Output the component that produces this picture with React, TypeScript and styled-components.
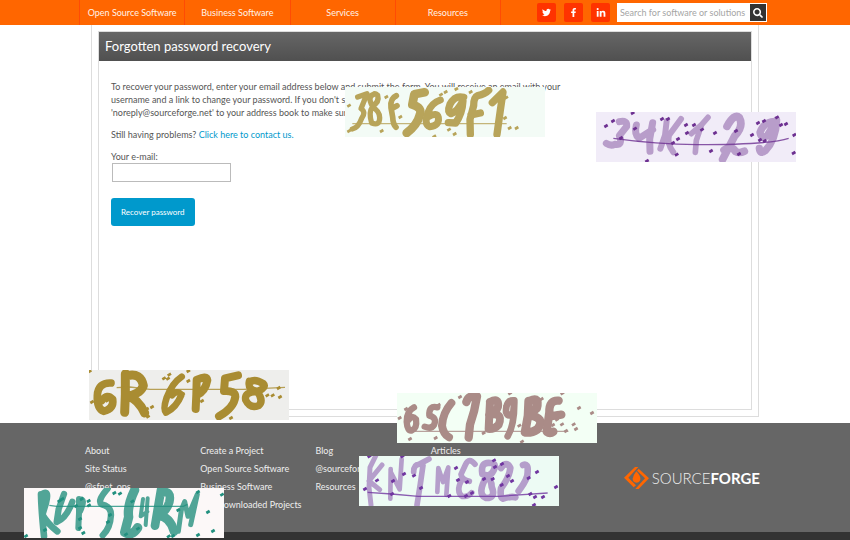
import React from "react";
import styled, { createGlobalStyle } from "styled-components";
import { FaTwitter, FaFacebookF, FaLinkedinIn, FaSearch } from "react-icons/fa";

const GlobalStyle = createGlobalStyle`
  *, *::before, *::after { box-sizing: border-box; }
  body {
    margin: 0;
    background: #fff;
    color: #555;
    font-family: Lato, "Open Sans", sans-serif;
    font-size: 9px;
    line-height: 13px;
  }
  a { text-decoration: none; }
  h1, p, ul { margin: 0; padding: 0; }
  ul { list-style: none; }
`;

const Page = styled.div`
  position: relative;
  min-height: 100vh;
  overflow: hidden;
  display: flex;
  flex-direction: column;
`;

const TopBar = styled.header`
  background: #f60;
`;

const TopBarInner = styled.div`
  display: flex;
  align-items: center;
  width: 100%;
  max-width: 692px;
  height: 25px;
  margin: 0 auto;
  padding-right: 4px;
`;

const Nav = styled.nav`
  display: flex;
  flex: 1;
  max-width: 422px;
  border-left: 1px solid #ff4b05;
`;

const NavLink = styled.a`
  flex: 1;
  border-right: 1px solid #ff4b05;
  color: #fff3e8;
  line-height: 25px;
  text-align: center;
  white-space: nowrap;
`;

const Social = styled.div`
  display: flex;
  gap: 8px;
  margin-left: auto;
`;

const SocialLink = styled.a`
  display: grid;
  place-items: center;
  width: 19px;
  height: 19px;
  border-radius: 2px;
  background: #f30;
  color: #fff;
`;

const Search = styled.form`
  display: flex;
  width: 150px;
  height: 19px;
  margin-left: 7px;
  padding-right: 1px;
  background: #fff;
`;

const SearchInput = styled.input`
  flex: 1;
  min-width: 0;
  border: 0;
  padding: 0 3px;
  background: #fff;
  font: inherit;
  outline: none;
  &::placeholder { color: #a5a5a5; opacity: 1; }
`;

const SearchButton = styled.button`
  display: grid;
  place-items: center;
  width: 16px;
  margin: 1px 0;
  padding: 0;
  border: 0;
  background: #333;
  color: #fff;
`;

const Frame = styled.main`
  display: flex;
  flex: 1;
  width: 100%;
  max-width: 668px;
  margin: 0 auto 6px;
  padding: 6px;
  border: 1px solid #ddd;
  border-top: 0;
`;

const Panel = styled.section`
  flex: 1;
  min-height: 320px;
  border: 1px solid #ddd;
`;

const Title = styled.h1`
  padding: 0 6px;
  background: linear-gradient(#666, #505050);
  color: #fff;
  font-size: 13px;
  font-weight: 400;
  line-height: 29px;
`;

const Content = styled.div`
  padding: 19px 12px;
`;

const Paragraph = styled.p`
  margin-bottom: 9px;
`;

const TextLink = styled.a`
  color: #09c;
`;

const Label = styled.label`
  display: block;
`;

const EmailInput = styled.input`
  display: block;
  width: 119px;
  height: 19px;
  margin-left: 1px;
  border: 1px solid #bbb;
  font: inherit;
`;

const SubmitButton = styled.button`
  height: 28px;
  margin-top: 16px;
  padding: 0 10px;
  border: 0;
  border-radius: 3px;
  background: #09c;
  color: #fff;
  font: inherit;
  font-size: 8px;
`;

const Footer = styled.footer`
  background: #666;
  border-bottom: 8px solid #333;
`;

const FooterInner = styled.div`
  display: flex;
  align-items: center;
  justify-content: space-between;
  width: 100%;
  max-width: 680px;
  height: 109px;
  margin: 0 auto;
`;

const FooterColumns = styled.div`
  display: grid;
  grid-template-columns: repeat(4, 1fr);
  flex: 1;
  max-width: 461px;
`;

const FooterLink = styled.a`
  display: block;
  color: #eee;
  line-height: 18px;
  white-space: nowrap;
`;

const Brand = styled.a`
  display: flex;
  align-items: center;
  gap: 3px;
  padding-right: 5px;
  color: #eee;
  font-size: 15px;
  font-weight: 300;
  line-height: 24px;
  b { font-weight: 700; color: #fff; }
`;

const Tile = styled.svg<{ $x: number; $y: number }>`
  position: absolute;
  left: ${(p) => p.$x}px;
  top: ${(p) => p.$y}px;
  width: 200px;
  height: 50px;
`;

type Scribble = {
  x: number; y: number; box: string; paper: string; ink: string; fleck: string;
  line: string; strokes: [number, string][]; flecks: number[][];
};

const scribbles: Scribble[] = [
  {
    x: 345, y: 87, box: "0 36 600 150", paper: "#f3fbf6", ink: "#b8a45a", fleck: "#b8a45a",
    line: "M22 146H485",
    strokes: [
      [16, "M38 66L66 56L48 101Q64 112 50 130Q40 158 22 162M86 58Q66 66 82 93Q104 82 98 61Q90 54 86 58M82 96Q70 112 80 144Q104 154 104 128Q104 108 82 96"],
      [17, "M154 62Q135 70 138 98L143 126Q144 148 153 157M142 100L156 92"],
      [26, "M239 52L208 58L202 89Q234 98 224 121Q217 150 185 174"],
      [21, "M286 75Q260 84 250 110Q235 148 254 155Q284 152 280 127Q276 112 252 124"],
      [22, "M356 67Q330 60 315 88Q306 110 318 116Q338 110 354 77Q352 116 332 144L310 143"],
      [22, "M376 178L375 133L386 92Q386 67 398 62Q420 58 431 46M378 120L406 114"],
      [22, "M442 83L474 51L466 106L456 178"],
    ],
    flecks: [[12,92],[124,66],[151,69],[166,126],[12,168],[110,168],[268,184],[288,59],[302,51],[334,42],[377,51],[484,68],[480,129],[494,159],[515,159],[329,177],[312,164],[288,79]],
  },
  {
    x: 596, y: 112, box: "18 21 600 150", paper: "#f1ecf8", ink: "#b89dca", fleck: "#6d3091",
    line: "M70 100Q200 118 320 119Q540 119 596 100",
    strokes: [
      [21, "M88 50Q112 44 110 64L88 92Q100 122 74 118Q62 124 49 115"],
      [21, "M139 60Q132 88 147 100L188 74M188 53L179 102L180 139"],
      [18, "M230 48L225 91L211 131M273 42L237 91Q230 114 250 142"],
      [17, "M304 86L335 59L319 106L316 142M335 59L354 37"],
      [23, "M411 64Q433 24 448 38Q462 64 434 93L398 163M402 135Q424 119 436 139Q448 146 463 139"],
      [22, "M553 49Q520 52 510 82Q514 104 532 92L560 45Q558 104 526 137Q510 150 508 130"],
    ],
    flecks: [[48,63],[69,48],[128,24],[135,71],[93,99],[216,42],[234,42],[288,60],[312,60],[291,84],[264,102],[249,114],[260,149],[171,168],[336,74],[375,84],[363,138],[438,78],[447,147],[486,90],[504,54],[522,48],[561,37],[573,60],[588,57],[510,105],[524,108],[613,90],[611,144]],
  },
  {
    x: 89, y: 370, box: "27 15 600 150", paper: "#eeeeec", ink: "#a98c32", fleck: "#a98c32",
    line: "M110 68L150 66L210 73H490L615 67",
    strokes: [
      [23, "M93 54Q54 52 52 92Q50 130 71 139Q102 132 98 103Q82 84 65 107"],
      [27, "M136 27L136 88L134 142M142 32Q182 22 190 62Q184 84 145 94Q174 102 194 144"],
      [20, "M305 35Q276 54 260 98Q248 134 258 143Q290 126 304 90Q292 73 276 91"],
      [24, "M350 45L349 88L347 132M352 44Q380 30 382 46Q376 79 351 90"],
      [24, "M474 31L435 40L432 78Q466 76 466 95Q462 128 417 154"],
      [22, "M508 49Q502 76 535 79Q560 66 550 56Q525 40 510 51M532 80Q492 80 497 105Q510 132 536 122Q552 107 532 80"],
    ],
    flecks: [[29,19],[36,111],[82,107],[140,18],[216,126],[201,132],[204,155],[268,29],[264,41],[252,40],[325,18],[325,48],[309,87],[366,108],[453,159],[562,91],[578,91],[596,69],[600,96]],
  },
  {
    x: 397, y: 393, box: "21 24 600 150", paper: "#f3fff5", ink: "#aa8b87", fleck: "#aa8b87",
    line: "M72 139H535",
    strokes: [
      [19, "M72 67Q50 78 50 110Q52 140 66 136Q82 130 78 103Q66 88 56 105"],
      [19, "M142 67Q116 60 118 92Q142 98 132 120Q124 133 104 125"],
      [24, "M184 54Q158 84 156 122Q160 148 177 157"],
      [25, "M229 51Q235 30 261 34Q254 80 240 119L236 158"],
      [24, "M300 51L298 88L296 132M300 51Q328 36 324 65Q316 90 297 90Q342 81 326 119Q314 132 298 132"],
      [20, "M371 46Q348 44 348 81Q356 102 370 80L373 46Q374 119 353 154"],
      [26, "M416 48L414 92L405 142M420 48Q450 34 440 70L414 90Q470 98 442 133Q426 144 405 142"],
      [25, "M506 47Q477 44 478 82L470 140Q480 148 490 140M480 94L514 89"],
    ],
    flecks: [[29,99],[48,72],[60,162],[146,60],[137,159],[210,36],[262,27],[281,144],[346,63],[388,122],[360,25],[396,170],[455,42],[501,84],[501,104],[516,118],[489,120],[528,138],[551,118],[558,132],[567,69],[606,84],[517,25]],
  },
  {
    x: 359, y: 456, box: "12 18 600 150", paper: "#edfbf4", ink: "#b59ecb", fleck: "#7036a0",
    line: "M38 127L110 132L190 139H430L578 129",
    strokes: [
      [15, "M62 18L45 52L42 112L48 165M81 45L42 93L74 119"],
      [14, "M107 57L106 146M108 68L134 118L140 27"],
      [17, "M176 66Q176 44 192 43L222 27M204 46L196 102L186 165"],
      [14, "M247 126L250 54L264 96L280 52L274 135"],
      [17, "M360 43Q342 20 331 45L318 73Q320 88 343 94M320 90Q302 124 321 139Q340 142 350 128"],
      [20, "M406 39Q376 35 382 72Q408 86 419 54Q422 38 406 39M395 79Q364 132 393 144Q424 144 410 110Q410 90 395 79"],
      [20, "M438 54Q455 31 466 54Q463 82 438 115Q434 142 444 146Q468 138 481 142"],
      [20, "M504 45Q520 39 518 65Q520 85 491 123"],
    ],
    flecks: [[30,117],[43,19],[66,91],[114,93],[111,132],[142,19],[147,72],[177,77],[198,114],[303,54],[309,90],[336,96],[351,129],[333,138],[283,138],[387,87],[413,87],[417,31],[420,51],[441,42],[459,78],[471,93],[440,105],[521,84],[546,66],[526,132],[540,141],[564,141],[603,111],[537,165]],
  },
  {
    x: 24, y: 488, box: "12 24 600 150", paper: "#fcf8f8", ink: "#51a597", fleck: "#21907f",
    line: "M88 76L110 79H490L502 73",
    strokes: [
      [20, "M63 43Q64 90 72 168M67 42Q88 28 78 68L67 104Q84 133 112 154"],
      [19, "M132 42L116 87L110 126Q140 114 157 65"],
      [18, "M177 57L177 99L175 144M178 58Q199 55 180 94"],
      [19, "M263 26Q230 63 245 73Q274 80 273 105Q271 145 248 166"],
      [28, "M344 30Q321 78 326 111L314 157Q336 170 353 143"],
      [12, "M369 57L362 109L382 95M383 55L377 135"],
      [26, "M423 30L414 83L405 137M424 38Q456 29 448 66Q438 98 413 106Q452 110 462 155"],
      [15, "M475 154L484 90L494 65L504 109L532 43L512 134"],
    ],
    flecks: [[18,168],[118,63],[127,57],[168,78],[185,57],[206,63],[207,76],[180,117],[190,159],[75,150],[180,144],[283,39],[300,41],[337,64],[270,105],[264,126],[354,146],[318,163],[446,169],[459,168],[475,90],[534,36],[606,44],[564,96],[579,153],[534,165]],
  },
];

function ScribbleTile({ s }: { s: Scribble }) {
  return (
    <Tile $x={s.x} $y={s.y} viewBox={s.box} aria-hidden="true">
      <rect x="0" y="0" width="640" height="200" fill={s.paper} />
      <g fill="none" stroke={s.ink} strokeLinecap="round" strokeLinejoin="round">
        {s.strokes.map(([w, d]) => <path key={d} d={d} strokeWidth={w} />)}
      </g>
      <path d={s.line} fill="none" stroke={s.fleck} strokeWidth="4" opacity="0.8" />
      <path
        d={s.flecks.map(([x, y]) => `M${x - 5} ${y + 3}L${x + 5} ${y - 3}`).join("")}
        stroke={s.fleck}
        strokeWidth="8"
      />
    </Tile>
  );
}

const footerColumns = [
  ["About", "Site Status", "@sfnet_ops"],
  ["Create a Project", "Open Source Software", "Business Software", "Top Downloaded Projects"],
  ["Blog", "@sourceforge", "Resources"],
  ["Articles"],
];

export default function App() {
  return (
    <>
      <GlobalStyle />
      <Page>
        <TopBar>
          <TopBarInner>
            <Nav>
              {["Open Source Software", "Business Software", "Services", "Resources"].map((t) => (
                <NavLink href="#" key={t}>{t}</NavLink>
              ))}
            </Nav>
            <Social>
              <SocialLink href="#" aria-label="Twitter"><FaTwitter size={9} /></SocialLink>
              <SocialLink href="#" aria-label="Facebook"><FaFacebookF size={9} /></SocialLink>
              <SocialLink href="#" aria-label="LinkedIn"><FaLinkedinIn size={10} /></SocialLink>
            </Social>
            <Search>
              <SearchInput aria-label="Search" placeholder="Search for software or solutions" />
              <SearchButton type="button" aria-label="Search"><FaSearch size={10} /></SearchButton>
            </Search>
          </TopBarInner>
        </TopBar>
        <Frame>
          <Panel>
            <Title>Forgotten password recovery</Title>
            <Content>
              <Paragraph>
                To recover your password, enter your email address below and submit the form. You will receive an email with your<br />
                username and a link to change your password. If you don't see the email, check your spam folder first and add<br />
                'noreply@sourceforge.net' to your address book to make sure you receive it.
              </Paragraph>
              <Paragraph>
                Still having problems? <TextLink href="#">Click here to contact us.</TextLink>
              </Paragraph>
              <Label htmlFor="email">Your e-mail:</Label>
              <EmailInput id="email" type="email" />
              <SubmitButton type="button">Recover password</SubmitButton>
            </Content>
          </Panel>
        </Frame>
        <Footer>
          <FooterInner>
            <FooterColumns>
              {footerColumns.map((items) => (
                <ul key={items[0]}>
                  {items.map((t) => <li key={t}><FooterLink href="#">{t}</FooterLink></li>)}
                </ul>
              ))}
            </FooterColumns>
            <Brand href="#">
              <svg width="25" height="22" viewBox="0 0 75 66" aria-hidden="true">
                <path d="M33 0H43L13 32L36 55L29 61L0 32ZM44 5L75 34L44 66H34L63 34L39 11Z" fill="#f60" />
                <path d="M37 13Q51 28 49 38Q46 47 37 47Q26 45 26 35Q28 24 37 13Z" fill="#f60" />
              </svg>
              <span>SOURCE<b>FORGE</b></span>
            </Brand>
          </FooterInner>
        </Footer>
        {scribbles.map((s) => <ScribbleTile key={s.box + s.x} s={s} />)}
      </Page>
    </>
  );
}
